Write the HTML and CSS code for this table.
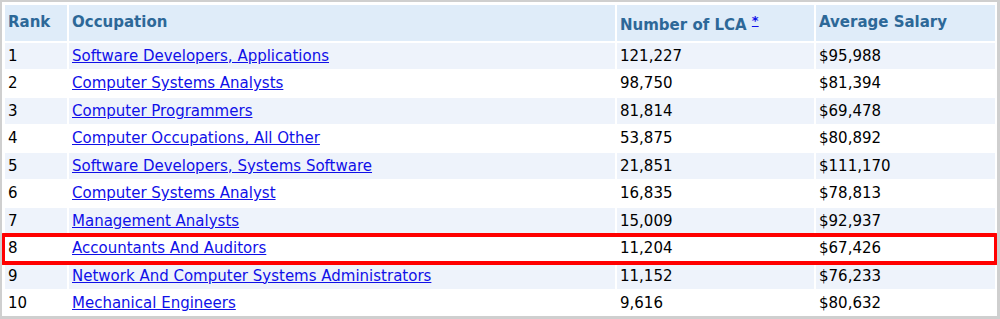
FILE: index.html
```html
<!DOCTYPE html>
<html lang="en">
<head>
    <meta charset="UTF-8">
    <title>Top Occupations by LCA</title>
    <link rel="stylesheet" href="styles.css">
</head>
<body>
    <div class="frame">
        <table class="lca-table">
            <thead>
                <tr>
                    <th class="col-rank">Rank</th>
                    <th class="col-occ">Occupation</th>
                    <th class="col-lca">Number of LCA <sup><a href="#note">*</a></sup></th>
                    <th class="col-salary">Average Salary</th>
                </tr>
            </thead>
            <tbody>
                <tr><td>1</td><td><a href="#">Software Developers, Applications</a></td><td>121,227</td><td>$95,988</td></tr>
                <tr><td>2</td><td><a href="#">Computer Systems Analysts</a></td><td>98,750</td><td>$81,394</td></tr>
                <tr><td>3</td><td><a href="#">Computer Programmers</a></td><td>81,814</td><td>$69,478</td></tr>
                <tr><td>4</td><td><a href="#">Computer Occupations, All Other</a></td><td>53,875</td><td>$80,892</td></tr>
                <tr><td>5</td><td><a href="#">Software Developers, Systems Software</a></td><td>21,851</td><td>$111,170</td></tr>
                <tr><td>6</td><td><a href="#">Computer Systems Analyst</a></td><td>16,835</td><td>$78,813</td></tr>
                <tr><td>7</td><td><a href="#">Management Analysts</a></td><td>15,009</td><td>$92,937</td></tr>
                <tr class="marked"><td>8</td><td><a href="#">Accountants And Auditors</a></td><td>11,204</td><td>$67,426</td></tr>
                <tr><td>9</td><td><a href="#">Network And Computer Systems Administrators</a></td><td>11,152</td><td>$76,233</td></tr>
                <tr><td>10</td><td><a href="#">Mechanical Engineers</a></td><td>9,616</td><td>$80,632</td></tr>
            </tbody>
        </table>
        <div class="highlight"></div>
    </div>
</body>
</html>
```

FILE: styles.css
```css
* {
    margin: 0;
    padding: 0;
    box-sizing: border-box;
}

body {
    font-family: 'DejaVu Sans', Verdana, sans-serif;
    font-size: 15px;
    color: #000;
    background-color: #fff;
}

.frame {
    position: relative;
    width: 1000px;
    height: 319px;
    border: solid #cfcfcf;
    border-width: 2px 3px 3px 2px;
    padding: 1px 0 0 1px;
    background-color: #fff;
    overflow: hidden;
}

.lca-table {
    border-collapse: separate;
    border-spacing: 2px;
    table-layout: fixed;
    width: 994px;
}

.col-rank { width: 62px; }
.col-occ { width: 546px; }
.col-lca { width: 197px; }
.col-salary { width: 179px; }

.lca-table th {
    height: 36px;
    padding: 8px 3px 0;
    text-align: left;
    vertical-align: top;
    font-weight: bold;
    color: #2d6898;
    background-color: #dfecf9;
}

.lca-table th sup {
    font-size: 13px;
    vertical-align: 5px;
}

.lca-table td {
    height: 25.5px;
    padding: 0 3px;
    vertical-align: middle;
    white-space: nowrap;
}

.lca-table tbody tr:nth-child(odd) td {
    background-color: #eef3fb;
}

.lca-table a {
    color: #1010e8;
    text-decoration: underline;
}

.highlight {
    position: absolute;
    left: -1px;
    top: 231px;
    width: 997px;
    height: 32px;
    border: 4px solid #f00;
    border-radius: 2px;
}
```
